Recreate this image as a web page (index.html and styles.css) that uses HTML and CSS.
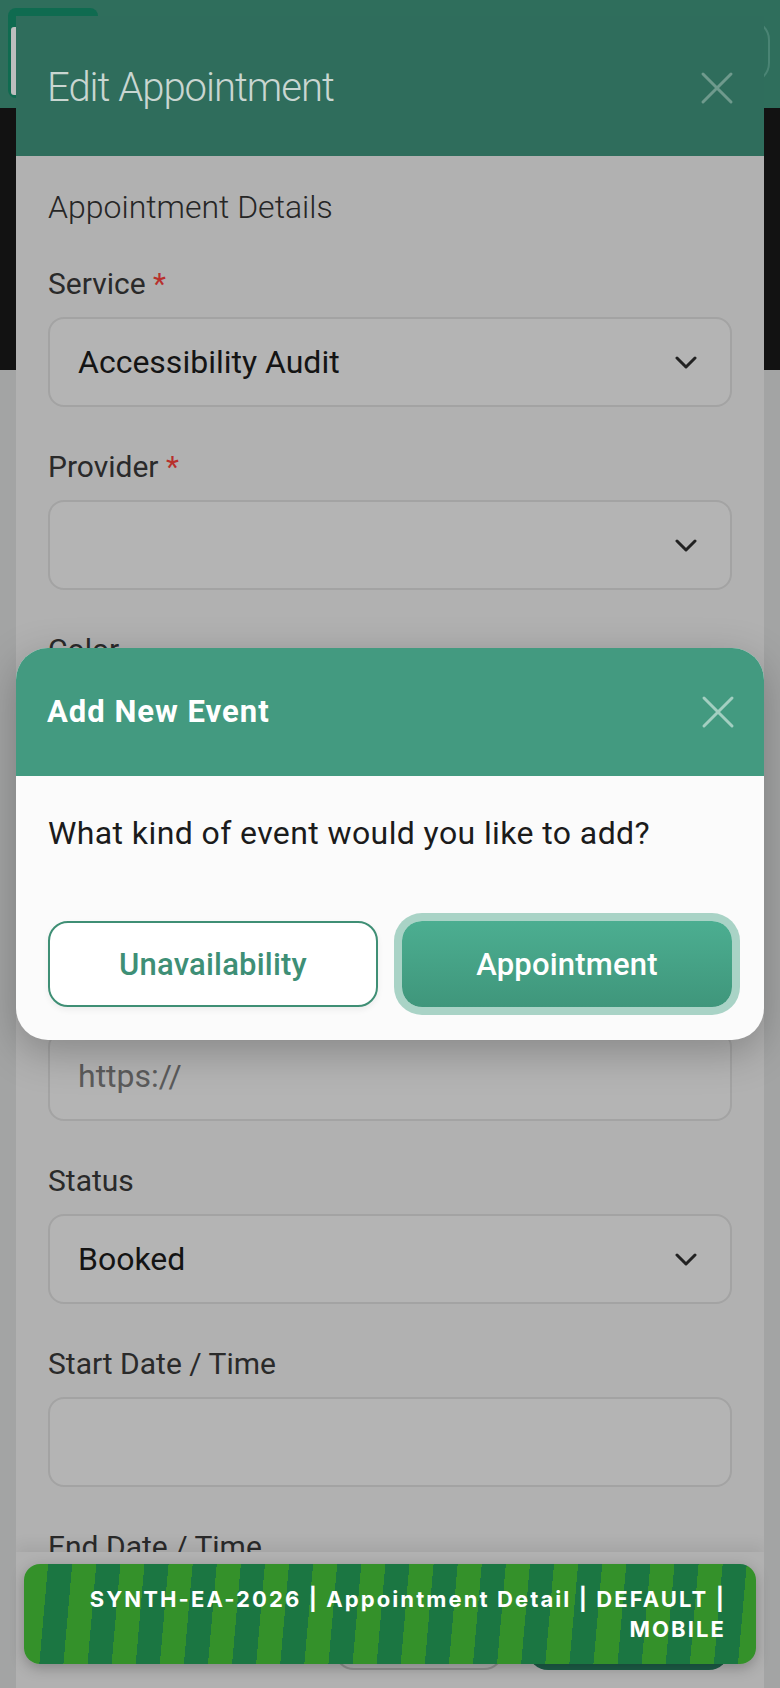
FILE: index.html
```html
<!DOCTYPE html>
<html lang="en">
<head>
<meta charset="utf-8">
<title>Edit Appointment</title>
<link rel="stylesheet" href="styles.css">
</head>
<body>
<div class="page">
  <header class="app-bar">
    <div class="logo-card"><div class="logo-inner"></div></div>
    <div class="search-pill"></div>
  </header>
  <section class="hero"></section>
  <main class="content"></main>
</div>

<div class="edit-modal">
  <div class="edit-header">
    <h1 class="edit-title">Edit Appointment</h1>
    <span class="close-x dim">
      <svg viewBox="0 0 34 34" width="34" height="34"><path d="M3 3 L31 31 M31 3 L3 31" fill="none" stroke="currentColor" stroke-width="3" stroke-linecap="round"/></svg>
    </span>
  </div>
  <div class="edit-body">
    <h2 class="section-title">Appointment Details</h2>

    <div class="field">
      <div class="label">Service <span class="req">*</span></div>
      <div class="box select"><span class="value">Accessibility Audit</span><svg class="chev" viewBox="0 0 22 13" width="22" height="13"><path d="M2 2 L11 11 L20 2" fill="none" stroke="currentColor" stroke-width="3" stroke-linecap="round" stroke-linejoin="round"/></svg></div>
    </div>

    <div class="field">
      <div class="label">Provider <span class="req">*</span></div>
      <div class="box select"><span class="value"></span><svg class="chev" viewBox="0 0 22 13" width="22" height="13"><path d="M2 2 L11 11 L20 2" fill="none" stroke="currentColor" stroke-width="3" stroke-linecap="round" stroke-linejoin="round"/></svg></div>
    </div>

    <div class="field">
      <div class="label">Color</div>
      <div class="box short"></div>
    </div>

    <div class="field">
      <div class="label">Location</div>
      <div class="box"></div>
    </div>

    <div class="field">
      <div class="label">Meeting Link</div>
      <div class="box"><span class="placeholder">https://</span></div>
    </div>

    <div class="field">
      <div class="label">Status</div>
      <div class="box select"><span class="value">Booked</span><svg class="chev" viewBox="0 0 22 13" width="22" height="13"><path d="M2 2 L11 11 L20 2" fill="none" stroke="currentColor" stroke-width="3" stroke-linecap="round" stroke-linejoin="round"/></svg></div>
    </div>

    <div class="field">
      <div class="label">Start Date / Time</div>
      <div class="box"></div>
    </div>

    <div class="field">
      <div class="label">End Date / Time</div>
      <div class="box"></div>
    </div>
  </div>
  <div class="edit-footer">
    <button class="btn-cancel" aria-label="Cancel"></button>
    <button class="btn-save" aria-label="Save"></button>
  </div>
</div>

<div class="dialog">
  <div class="dialog-header">
    <h3 class="dialog-title">Add New Event</h3>
    <span class="close-x light">
      <svg viewBox="0 0 34 34" width="34" height="34"><path d="M3 3 L31 31 M31 3 L3 31" fill="none" stroke="currentColor" stroke-width="3" stroke-linecap="round"/></svg>
    </span>
  </div>
  <div class="dialog-body">
    <p class="question">What kind of event would you like to add?</p>
    <div class="choice-row">
      <button class="btn-choice outline">Unavailability</button>
      <button class="btn-choice filled">Appointment</button>
    </div>
  </div>
</div>

<div class="banner">
  <div class="banner-text">SYNTH-EA-2026 | Appointment Detail | DEFAULT | MOBILE</div>
</div>
</body>
</html>
```

FILE: styles.css
```css
* { box-sizing: border-box; }

html, body {
  margin: 0;
  padding: 0;
}

body {
  width: 780px;
  height: 1688px;
  overflow: hidden;
  position: relative;
  font-family: Roboto, "Liberation Sans", sans-serif;
  background: #a3a4a4;
}

/* ---------- page behind ---------- */
.page {
  display: flex;
  flex-direction: column;
}

.app-bar {
  height: 108px;
  background: #2f6e5c;
  display: flex;
  align-items: flex-start;
  justify-content: space-between;
  padding: 8px 10px 0 8px;
}

.logo-card {
  width: 90px;
  height: 90px;
  border-radius: 8px;
  background: #0f6b50;
  padding: 19px 3px 3px 3px;
}

.logo-inner {
  height: 100%;
  background: #bdbebe;
  border-radius: 3px;
}

.search-pill {
  margin-top: 12px;
  width: 300px;
  height: 63px;
  border: 2px solid #4a8474;
  border-radius: 20px;
}

.hero {
  height: 262px;
  background: #121212;
}

.content {
  height: 1318px;
  background: #a3a4a4;
}

/* ---------- edit modal ---------- */
.edit-modal {
  position: absolute;
  left: 16px;
  top: 16px;
  width: 748px;
  height: 1700px;
  background: #b1b1b1;
  overflow: hidden;
}

.edit-header {
  height: 140px;
  background: #2f6d5c;
  display: flex;
  align-items: center;
  justify-content: space-between;
  padding: 4px 30px 0 31px;
}

.edit-title {
  margin: 0;
  font-size: 40px;
  line-height: 48px;
  font-weight: 300;
  color: #c9d6d1;
  letter-spacing: -1px;
}

.close-x {
  display: flex;
  width: 34px;
  height: 34px;
}

.close-x.dim { color: #6f9a8d; }
.close-x.light { color: #a3cfc1; }

.edit-body {
  padding: 33px 32px 0 32px;
}

.section-title {
  margin: 0 0 41px 0;
  font-size: 32px;
  line-height: 36px;
  font-weight: 300;
  color: #262626;
}

.field {
  margin-bottom: 42px;
}

.label {
  font-size: 30px;
  line-height: 36px;
  color: #2a2a2a;
  margin-bottom: 15px;
}

.req { color: #b8302c; }

.box {
  height: 90px;
  border: 2px solid #a3a3a3;
  border-radius: 16px;
  background: #b4b4b4;
  display: flex;
  align-items: center;
  justify-content: space-between;
  padding: 0 33px 0 28px;
}

.box.short { height: 72px; }

.value {
  font-size: 32px;
  color: #141414;
}

.placeholder {
  font-size: 32px;
  color: #5b5b5b;
}

.chev { color: #222222; }

.edit-footer {
  position: absolute;
  left: 0;
  right: 0;
  top: 1536px;
  height: 160px;
  background: #b1b1b1;
  box-shadow: 0 -6px 14px rgba(0, 0, 0, 0.08);
  display: flex;
  justify-content: flex-end;
  align-items: flex-start;
  gap: 24px;
  padding: 34px 35px 0 0;
}

.btn-cancel, .btn-save {
  height: 84px;
  border-radius: 20px;
}

.btn-cancel {
  width: 170px;
  border: 2px solid #929292;
  background: transparent;
}

.btn-save {
  width: 201px;
  border: none;
  background: #1d5e48;
}

/* ---------- add event dialog ---------- */
.dialog {
  position: absolute;
  left: 16px;
  top: 648px;
  width: 748px;
  border-radius: 32px;
  overflow: hidden;
  background: #fbfbfb;
  box-shadow: 0 12px 40px rgba(0, 0, 0, 0.25);
}

.dialog-header {
  height: 128px;
  background: #439a80;
  display: flex;
  align-items: center;
  justify-content: space-between;
  padding: 0 29px 0 31px;
}

.dialog-title {
  margin: 0;
  font-size: 31px;
  line-height: 36px;
  font-weight: 700;
  letter-spacing: 1px;
  color: #ffffff;
}

.dialog-body {
  padding: 32px 32px 33px 32px;
}

.question {
  margin: 7px 0 70px 0;
  font-size: 32px;
  line-height: 36px;
  letter-spacing: 0.4px;
  color: #1b1b1b;
}

.choice-row {
  display: grid;
  grid-template-columns: 1fr 1fr;
  gap: 24px;
}

.btn-choice {
  height: 86px;
  border-radius: 20px;
  font-family: inherit;
  font-size: 31px;
  font-weight: 500;
  letter-spacing: 0.2px;
}

.btn-choice.outline {
  border: 2px solid #3f8f75;
  background: #ffffff;
  color: #3e8f76;
  box-shadow: 0 3px 6px rgba(0, 0, 0, 0.06);
}

.btn-choice.filled {
  border: none;
  background: linear-gradient(180deg, #4cae91 0%, #3f967b 100%);
  color: #ffffff;
  box-shadow: 0 0 0 8px #a9d3c6;
}

/* ---------- banner ---------- */
.banner {
  position: absolute;
  left: 24px;
  right: 24px;
  bottom: 24px;
  height: 100px;
  border-radius: 16px;
  background: repeating-linear-gradient(95deg, #34912a 0 24px, #1b7642 24px 48px);
  box-shadow: 0 4px 14px rgba(0, 0, 0, 0.25);
  display: flex;
  align-items: center;
  justify-content: flex-end;
  padding: 0 30px 0 40px;
}

.banner-text {
  font-family: Inter, Roboto, sans-serif;
  font-size: 22px;
  line-height: 30px;
  font-weight: 700;
  letter-spacing: 2.1px;
  color: #ffffff;
  text-align: right;
}
```
